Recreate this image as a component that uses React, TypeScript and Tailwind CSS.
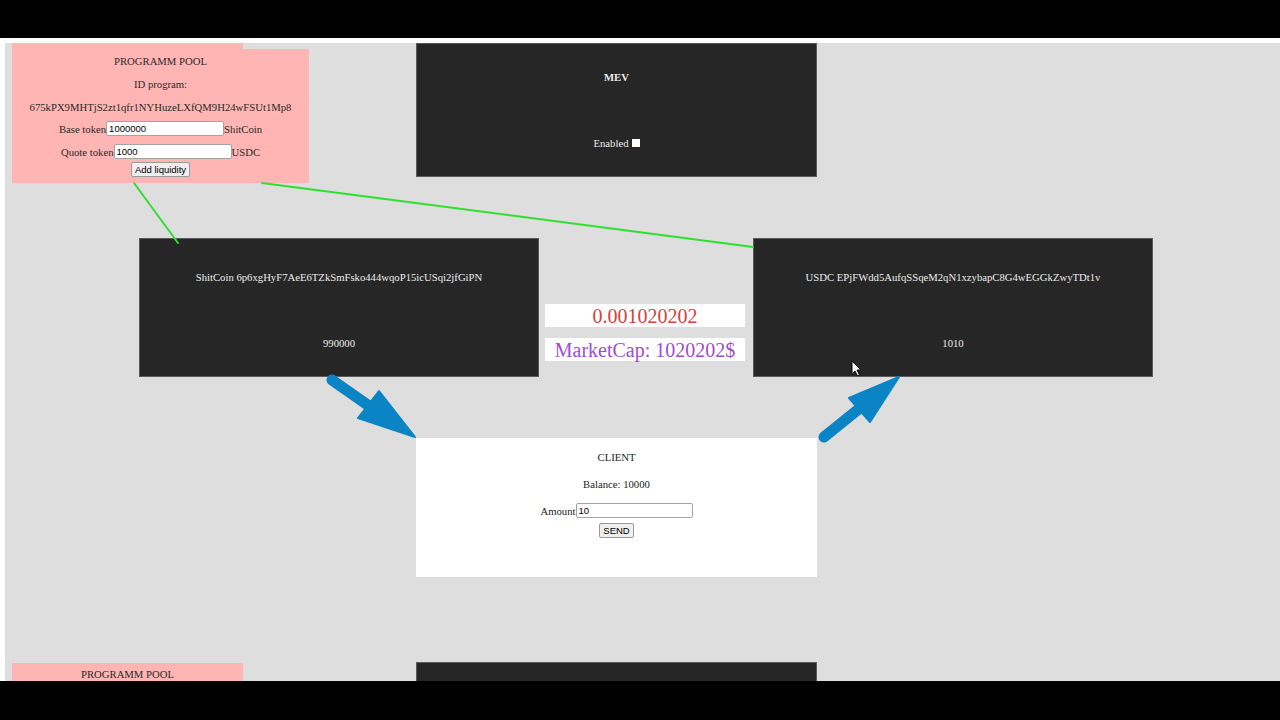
import React, {useState} from "react";

const serif = "font-['Liberation_Serif','Times_New_Roman',serif]";
const sans = "font-['Liberation_Sans',Arial,sans-serif]";

const TextInput = ({
  value,
  onChange,
  width,
}: {
  value: string;
  onChange: (v: string) => void;
  width: string;
}) => (
  <input
    type="text"
    value={value}
    onChange={(e) => onChange(e.target.value)}
    className={`${width} ${sans} h-[15px] rounded-[2px] border border-[#a3a3a3] bg-white px-[2px] text-[9.5px] leading-[13px] text-black outline-none`}
  />
);

const SmallButton = ({children}: {children: React.ReactNode}) => (
  <button
    className={`${sans} h-[15px] rounded-[2px] border border-[#9a9a9a] bg-[#efefef] px-[3px] text-[9.5px] leading-[13px] text-black`}
  >
    {children}
  </button>
);

const TokenBox = ({label, amount}: {label: string; amount: string}) => (
  <div className="flex h-[139px] w-[400px] flex-col items-center border border-[#5a5a5a] bg-[#262626] pt-[32px] text-[10.7px] leading-[12px] text-[#ececec]">
    <div>{label}</div>
    <div className="mt-[54px]">{amount}</div>
  </div>
);

// connections between nodes, plus the two blue direction arrows
const Wires = () => (
  <svg
    className="pointer-events-none absolute left-0 top-0"
    width="1275"
    height="638"
    viewBox="5 43 1275 638"
  >
    <g stroke="#2fe02f" strokeWidth="2" strokeLinecap="round">
      <line x1="134" y1="183" x2="178" y2="243" />
      <line x1="262" y1="183" x2="753" y2="247" />
    </g>
    <g fill="#0b84c6" stroke="#0b84c6">
      <line x1="332" y1="380" x2="372" y2="408" strokeWidth="11" strokeLinecap="round" />
      <polygon points="379,391 358,418 415,437" strokeWidth="2" strokeLinejoin="round" />
      <line x1="824" y1="437" x2="860" y2="408" strokeWidth="11" strokeLinecap="round" />
      <polygon points="849,398 870,422 899,377" strokeWidth="2" strokeLinejoin="round" />
    </g>
    <path
      d="M852 361 L852 374 L855 371 L857.5 376 L859.5 375 L857 370 L861 370 Z"
      fill="#fff"
      stroke="#000"
      strokeWidth="1"
      strokeLinejoin="round"
    />
  </svg>
);

export default function App() {
  const [baseAmount, setBaseAmount] = useState("1000000");
  const [quoteAmount, setQuoteAmount] = useState("1000");
  const [sendAmount, setSendAmount] = useState("10");

  return (
    <div className={`${serif} flex h-[720px] w-[1280px] flex-col overflow-hidden bg-black`}>
      <div className="h-[38px] shrink-0" />

      <div className="flex h-[643px] shrink-0 flex-col bg-white pl-[5px] pt-[5px]">
        <div className="relative h-[638px] overflow-hidden bg-[#dedede]">
          {/* pool + mev */}
          <div className="flex items-start">
            <div className="ml-[7px] w-[297px]">
              <div className="h-[6px] w-[231px] bg-[#ffb5b3]" />
              <div className="flex h-[134px] flex-col items-center bg-[#ffb5b3] text-[10.7px] leading-[12px] text-[#2a2a2a]">
                <div className="flex h-[23px] items-center">PROGRAMM POOL</div>
                <div className="flex h-[23px] items-center">ID program:</div>
                <div className="flex h-[23px] items-center">
                  675kPX9MHTjS2zt1qfr1NYHuzeLXfQM9H24wFSUt1Mp8
                </div>
                <div className="-mt-px flex h-[23px] items-center">
                  Base token
                  <TextInput value={baseAmount} onChange={setBaseAmount} width="w-[118px]" />
                  ShitCoin
                </div>
                <div className="flex h-[23px] items-center">
                  Quote token
                  <TextInput value={quoteAmount} onChange={setQuoteAmount} width="w-[118px]" />
                  USDC
                </div>
                <div className="-mt-[1px]">
                  <SmallButton>Add liquidity</SmallButton>
                </div>
              </div>
            </div>

            <div className="ml-[107px] flex h-[134px] w-[401px] flex-col items-center border border-[#5a5a5a] bg-[#262626] pt-[27px] text-[10.7px] leading-[12px] text-[#ececec]">
              <div className="font-bold">MEV</div>
              <div className="mt-[54px] flex items-center gap-[3px]">
                Enabled
                <span className="inline-block h-[8px] w-[8px] bg-white" />
              </div>
            </div>
          </div>

          {/* token accounts and price */}
          <div className="mt-[55px] flex items-start">
            <div className="ml-[134px]">
              <TokenBox
                label="ShitCoin 6p6xgHyF7AeE6TZkSmFsko444wqoP15icUSqi2jfGiPN"
                amount="990000"
              />
            </div>
            <div className="ml-[6px] mt-[66px] flex w-[200px] flex-col gap-[11px] text-[20px] leading-[24px]">
              <div className="h-[23px] bg-white text-center text-[#d0433d]">0.001020202</div>
              <div className="h-[23px] bg-white text-center text-[#a04ccf]">MarketCap: 1020202$</div>
            </div>
            <div className="ml-[8px]">
              <TokenBox
                label="USDC EPjFWdd5AufqSSqeM2qN1xzybapC8G4wEGGkZwyTDt1v"
                amount="1010"
              />
            </div>
          </div>

          {/* client */}
          <div className="ml-[411px] mt-[61px] flex h-[139px] w-[401px] flex-col items-center bg-white pt-[13px] text-[10.7px] leading-[12px] text-[#222]">
            <div>CLIENT</div>
            <div className="mt-[15px]">Balance: 10000</div>
            <div className="mt-[13px] flex items-center">
              Amount
              <TextInput value={sendAmount} onChange={setSendAmount} width="w-[117px]" />
            </div>
            <div className="mt-[5px]">
              <SmallButton>SEND</SmallButton>
            </div>
          </div>

          {/* next pool, cut off by the window */}
          <div className="mt-[85px] flex items-start">
            <div className="ml-[7px] mt-px flex h-[30px] w-[231px] justify-center bg-[#ffb5b3] pt-[5px] text-[10.7px] leading-[12px] text-[#2a2a2a]">
              PROGRAMM POOL
            </div>
            <div className="ml-[173px] h-[60px] w-[401px] border border-[#5a5a5a] bg-[#262626]" />
          </div>

          <Wires />
        </div>
      </div>

      <div className="flex-1" />
    </div>
  );
}
